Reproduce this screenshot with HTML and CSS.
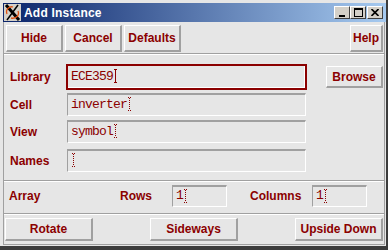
FILE: index.html
```html
<!DOCTYPE html>
<html lang="en">
<head>
	<meta charset="UTF-8">
	<title>Add Instance</title>
	<link rel="stylesheet" href="styles.css">
</head>
<body>
	<div class="window">
		<div class="titlebar">
			<svg class="logo" width="17" height="17" viewBox="0 0 17 17">
				<path d="M2 1 L15 16" stroke="#000" stroke-width="3"/>
				<path d="M14 1 L3 16" stroke="#000" stroke-width="1.5"/>
				<path d="M3 10 C1 5 6 2 9 3" stroke="#e05010" stroke-width="1.3" fill="none"/>
				<path d="M14 7 C16 12 11 15 7 14" stroke="#e05010" stroke-width="1.3" fill="none"/>
			</svg>
			<span class="title">Add Instance</span>
			<div class="wm">
				<span class="wm-btn"><svg width="8" height="8" viewBox="0 0 8 8"><rect x="1" y="6" width="6" height="2" fill="#000"/></svg></span>
				<span class="wm-btn"><svg width="9" height="9" viewBox="0 0 9 9"><rect x="0.5" y="0.5" width="8" height="8" fill="none" stroke="#000"/><rect x="0" y="0" width="9" height="2" fill="#000"/></svg></span>
				<span class="wm-btn wm-close"><svg width="8" height="7" viewBox="0 0 8 7"><path d="M0.5 0 L7.5 7 M7.5 0 L0.5 7" stroke="#000" stroke-width="1.6"/></svg></span>
			</div>
		</div>
		<div class="dialog">
			<div class="toolbar">
				<button class="btn btn-top">Hide</button>
				<button class="btn btn-top">Cancel</button>
				<button class="btn btn-top">Defaults</button>
				<button class="btn btn-top btn-help">Help</button>
			</div>
			<div class="sep"></div>
			<div class="form">
				<div class="row row-library">
					<span class="label">Library</span>
					<div class="field field-focus">ECE359<span class="caret"></span></div>
					<button class="btn btn-browse">Browse</button>
				</div>
				<div class="row row-cell">
					<span class="label">Cell</span>
					<div class="field">inverter<span class="caret dotted"></span></div>
				</div>
				<div class="row row-view">
					<span class="label">View</span>
					<div class="field">symbol<span class="caret dotted"></span></div>
				</div>
				<div class="row row-names">
					<span class="label">Names</span>
					<div class="field"><span class="caret dotted"></span></div>
				</div>
			</div>
			<div class="sep"></div>
			<div class="array">
				<span class="label label-array">Array</span>
				<span class="label label-rows">Rows</span>
				<div class="field field-small">1<span class="caret dotted"></span></div>
				<span class="label label-cols">Columns</span>
				<div class="field field-small">1<span class="caret dotted"></span></div>
			</div>
			<div class="sep"></div>
			<div class="actions">
				<button class="btn btn-action">Rotate</button>
				<button class="btn btn-action">Sideways</button>
				<button class="btn btn-action">Upside Down</button>
			</div>
		</div>
	</div>
</body>
</html>
```

FILE: styles.css
```css
*{
	margin: 0;
	padding: 0;
	box-sizing: border-box;
}
body{
	background: #e6e6e6;
	font-family: "Liberation Sans", Arial, sans-serif;
}
.window{
	width: 388px;
	padding: 3px 0 1px 3px;
	background: #e6e6e6;
	border-right: 2px solid #3c3c3c;
	border-bottom: 4px solid #3c3c3c;
}
.titlebar{
	display: flex;
	align-items: center;
	width: 383px;
	height: 19px;
	padding-left: 1px;
	background: linear-gradient(to right, #0a246a, #a6caf0);
}
.logo{
	display: block;
	background: #d4d0c8;
}
.title{
	margin-left: 3px;
	color: #fff;
	font-size: 12px;
	font-weight: bold;
	letter-spacing: 0.2px;
}
.wm{
	display: flex;
	margin-left: auto;
	margin-right: 3px;
}
.wm-btn{
	display: flex;
	align-items: center;
	justify-content: center;
	width: 16px;
	height: 13px;
	background: #d4d0c8;
	border: 1px solid;
	border-color: #fff #404040 #404040 #fff;
}
.wm-close{
	margin-left: 1px;
}
.dialog{
	margin-right: 1px;
	border: 1px solid #a0a0a0;
	border-top: 0;
}
.sep{
	height: 2px;
	border-top: 1px solid #a0a0a0;
	border-bottom: 1px solid #fff;
}
.btn{
	height: 27px;
	background: #e6e6e6;
	border-style: solid;
	border-width: 1px 2px 2px 1px;
	border-color: #fff #a0a0a0 #a0a0a0 #fff;
	color: #8b0000;
	font-family: "Liberation Sans", Arial, sans-serif;
	font-size: 12px;
	font-weight: bold;
}
.toolbar{
	display: flex;
	gap: 2px;
	padding: 3px 1px 1px 2px;
}
.btn-top{
	width: 57px;
}
.btn-help{
	width: 33px;
	margin-left: auto;
}
.form{
	padding: 9px 0 8px 6px;
}
.row{
	display: flex;
	align-items: center;
	height: 23px;
}
.row-library{
	height: 26px;
}
.row-cell{
	margin-top: 3px;
}
.row-view{
	margin-top: 4px;
}
.row-names{
	margin-top: 6px;
}
.label{
	color: #8b0000;
	font-size: 12px;
	font-weight: bold;
}
.row .label{
	width: 56px;
}
.field{
	display: flex;
	align-items: center;
	width: 239px;
	height: 23px;
	margin-left: 1px;
	padding: 0 0 2px 3px;
	border-style: solid;
	border-width: 2px 1px 1px 1px;
	border-color: #a0a0a0 #fff #fff #a0a0a0;
	color: #8b0000;
	font-family: "Liberation Mono", "Courier New", monospace;
	font-size: 13px;
	letter-spacing: -0.8px;
}
.field-focus{
	width: 241px;
	height: 26px;
	margin-left: 0;
	padding-left: 3px;
	border: 2px solid #8b0000;
	box-shadow: inset -1px -1px 0 #fff;
}
.caret{
	display: inline-block;
	width: 3px;
	height: 14px;
	margin-left: 1px;
	border-top: 1px solid #8b0000;
	border-bottom: 1px solid #8b0000;
	background: linear-gradient(#8b0000, #8b0000) center / 1px 100% no-repeat;
}
.caret.dotted{
	border-top-style: dotted;
	border-bottom-style: dotted;
	background: repeating-linear-gradient(#8b0000 0 1px, transparent 1px 2px) center / 1px 100% no-repeat;
}
.btn-browse{
	width: 57px;
	height: 22px;
	margin-left: 19px;
}
.array{
	display: flex;
	align-items: center;
	padding: 3px 0 6px 5px;
}
.label-array{
	width: 111px;
}
.label-rows{
	width: 52px;
}
.label-cols{
	width: 62px;
	margin-left: 23px;
}
.field-small{
	width: 55px;
	height: 22px;
	margin-left: 0;
}
.actions{
	display: flex;
	justify-content: space-between;
	padding: 3px 1px 3px 1px;
}
.btn-action{
	width: 88px;
	height: 23px;
}
```
